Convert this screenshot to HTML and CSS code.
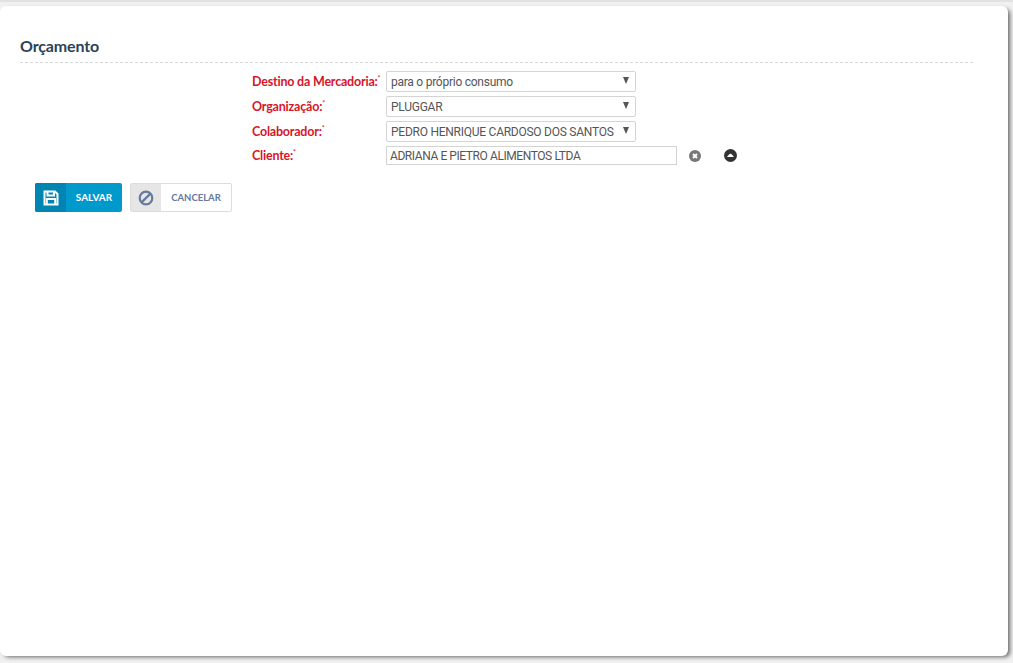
FILE: index.html
```html
<!DOCTYPE html>
<html lang="pt">
<head>
<meta charset="utf-8">
<title>Orçamento</title>
<link rel="stylesheet" href="styles.css">
</head>
<body>
<main class="panel">
  <h1 class="title">Orçamento</h1>
  <form class="form">
    <div class="row">
      <label class="label">Destino da Mercadoria:<sup>*</sup></label>
      <div class="select"><span>para o próprio consumo</span><i class="caret"></i></div>
    </div>
    <div class="row">
      <label class="label">Organização:<sup>*</sup></label>
      <div class="select"><span>PLUGGAR</span><i class="caret"></i></div>
    </div>
    <div class="row">
      <label class="label">Colaborador:<sup>*</sup></label>
      <div class="select"><span>PEDRO HENRIQUE CARDOSO DOS SANTOS</span><i class="caret"></i></div>
    </div>
    <div class="row row-client">
      <label class="label">Cliente:<sup>*</sup></label>
      <div class="input">ADRIANA E PIETRO ALIMENTOS LTDA</div>
      <svg class="ico ico-clear" viewBox="0 0 12 12" width="12" height="12"><circle cx="6" cy="6" r="6" fill="#777"/><path d="M4 4l4 4M8 4l-4 4" stroke="#fff" stroke-width="2"/></svg>
      <svg class="ico ico-up" viewBox="0 0 12 12" width="13" height="13"><circle cx="6" cy="6" r="6" fill="#333"/><path d="M2.800 7.400C4 5.800 5 4.600 6 4.400c1 .2 2 1.400 3.200 3z" fill="#fff"/></svg>
    </div>
  </form>
  <div class="actions">
    <button type="button" class="btn btn-save">
      <span class="btn-icon"><svg viewBox="0 0 16 16" width="16" height="16" fill="none" stroke="#fff" stroke-width="2"><path d="M1.500 1.500h10.500l2.500 2.500v10.500h-13z"/><path d="M4.500 1.500v4h6.500v-4"/><path d="M3.800 14.500v-5.500h8.400v5.500"/></svg></span>
      <span class="btn-text">SALVAR</span>
    </button>
    <button type="button" class="btn btn-cancel">
      <span class="btn-icon"><svg viewBox="0 0 16 16" width="16" height="16" fill="none" stroke="#66799e" stroke-width="2.200"><circle cx="8" cy="8" r="6.300"/><path d="M3.600 12.400l8.800-8.800"/></svg></span>
      <span class="btn-text">CANCELAR</span>
    </button>
  </div>
</main>
</body>
</html>
```
FILE: styles.css
```css
* { box-sizing: border-box; }
html, body { height: 100%; }
body {
  margin: 0;
  overflow: hidden;
  background: #f1f1f1;
  padding: 4px 5px 7px 0;
  font-family: Lato, "Liberation Sans", sans-serif;
  border-top: 2px solid #e2e2e2;
}
.panel {
  height: 650px;
  background: #fff;
  border-radius: 6px;
  box-shadow: 3px 2px 4px -1px #666;
  padding: 28px 35px 0 20px;
}
.title {
  margin: 0;
  font-size: 16px;
  letter-spacing: -0.15px;
  line-height: 24px;
  height: 29px;
  font-weight: 700;
  color: #2b4256;
  border-bottom: 1px dashed #d8d8d8;
}
.form { display: flex; flex-direction: column; gap: 4px; padding: 8px 0 0 232px; }
.row { display: flex; align-items: center; height: 21px; }
.row-client { height: 19px; }
.label { width: 134px; font-size: 12.500px; letter-spacing: -0.2px; font-weight: 700; color: #d8152a; white-space: nowrap; }
.label sup { font-size: 7px; font-weight: 400; line-height: 0; }
.select, .input {
  border: 1px solid #d4d4d4;
  font-family: Roboto, sans-serif;
  font-size: 12px;
  color: #555;
  background: #fff;
  white-space: nowrap;
}
.select { width: 250px; height: 21px; border-radius: 2px; display: flex; align-items: center; justify-content: space-between; padding: 0 6px 0 4px; letter-spacing: -0.25px; }
.caret { width: 0; height: 0; border-left: 3.500px solid transparent; border-right: 3.500px solid transparent; border-top: 7px solid #555; margin-top: -2px; }
.input { width: 291px; height: 19px; display: flex; align-items: center; padding-left: 3px; letter-spacing: -0.42px; }
.ico-clear { margin-left: 12px; }
.ico-up { margin-left: 23px; }
.actions { display: flex; gap: 8px; padding: 18px 0 0 15px; }
.btn {
  display: flex;
  align-items: stretch;
  height: 29px;
  padding: 0;
  border-radius: 2px;
  font: 700 10px Lato, sans-serif;
  cursor: pointer;
}
.btn-icon { width: 31px; display: flex; align-items: center; justify-content: center; }
.btn-text { display: flex; align-items: center; justify-content: center; padding-bottom: 1px; }
.btn-save { width: 87px; border: 0; background: #0099cc; color: #fff; }
.btn-save .btn-icon { background: #0085b2; border-radius: 2px 0 0 2px; }
.btn-save .btn-text { width: 56px; }
.btn-cancel { width: 102px; border: 1px solid #dcdcdc; background: #fff; color: #66799e; font-size: 9.500px; }
.btn-cancel .btn-icon { width: 30px; background: #e6e6e6; }
.btn-cancel .btn-text { flex: 1; }
```
